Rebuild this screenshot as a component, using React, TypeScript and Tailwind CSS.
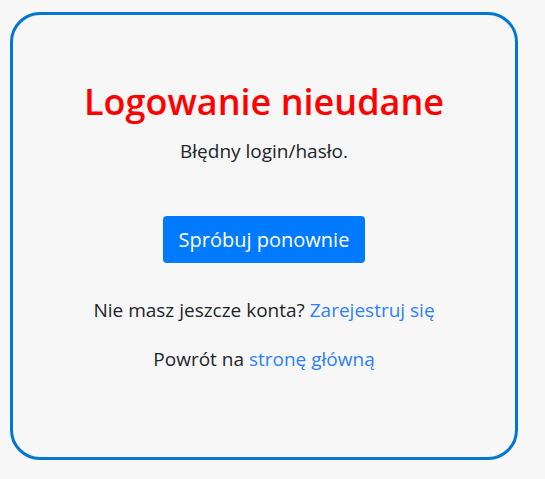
export default function App() {
  return (
    <div className="min-h-[479px] w-full bg-[#f7f7f7] pt-[12px] pl-[10px] font-['Open_Sans',sans-serif] text-[#212529]">
      <div className="flex h-[448px] w-[508px] flex-col items-center rounded-[30px] border-[3px] border-[#0077d4] pt-[63px] text-center">
        <h1 className="text-[36px] leading-[48px] font-semibold text-[#ff0000]">Logowanie nieudane</h1>
        <p className="mt-[11px] text-[19px] leading-[28px]">Błędny login/hasło.</p>
        <button className="mt-[51px] h-[47px] rounded-[4px] bg-[#007bff] px-[16px] text-[20px] text-white">
          Spróbuj ponownie
        </button>
        <p className="mt-[33px] text-[19px] leading-[28px]">
          Nie masz jeszcze konta? <a href="#" className="text-[#2f80ff]">Zarejestruj się</a>
        </p>
        <p className="mt-[21px] text-[19px] leading-[28px]">
          Powrót na <a href="#" className="text-[#2f80ff]">stronę główną</a>
        </p>
      </div>
    </div>
  );
}
